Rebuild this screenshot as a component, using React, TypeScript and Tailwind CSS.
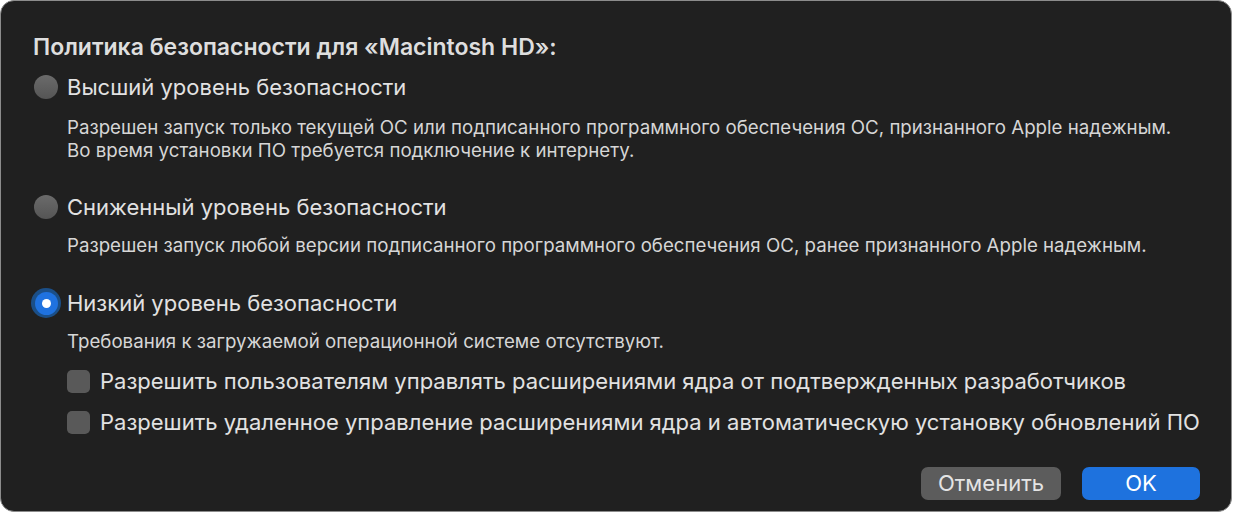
import React from "react";

const font = { fontFamily: "Inter, 'Noto Sans', sans-serif" };

function Radio({ checked }: { checked?: boolean }) {
  if (checked) {
    return (
      <span className="flex h-[30px] w-[30px] items-center justify-center rounded-full bg-[#1b4f88]">
        <span className="flex h-[23px] w-[23px] items-center justify-center rounded-full bg-[#1f72e0]">
          <span className="h-[9px] w-[9px] rounded-full bg-white" />
        </span>
      </span>
    );
  }
  return (
    <span className="flex h-[30px] w-[30px] items-center justify-center">
      <span className="h-[24px] w-[24px] rounded-full bg-gradient-to-b from-[#6b6b6b] to-[#555555]" />
    </span>
  );
}

function Checkbox() {
  return <span className="h-[23px] w-[23px] rounded-[5px] bg-[#595959]" />;
}

function Option({
  label,
  lines,
  checked,
  gap,
}: {
  label: string;
  lines: string[];
  checked?: boolean;
  gap: string;
}) {
  return (
    <div>
      <div className="flex h-[28px] items-center gap-[6px]">
        <Radio checked={checked} />
        <span className="text-[22px] leading-[28px] text-[#e2e2e2]">{label}</span>
      </div>
      <div className={`${gap} pl-[36px] text-[18.7px] leading-[23px] text-[#d6d6d6]`}>
        {lines.map((l) => (
          <div key={l}>{l}</div>
        ))}
      </div>
    </div>
  );
}

export default function App() {
  return (
    <div className="h-[513px] w-[1234px] bg-white" style={font}>
      <div className="flex h-[512px] w-[1232px] flex-col rounded-[14px] border border-[#8c8c8c] bg-[#202020] pl-[30px] pr-[30px] pt-[33px]">
        <h1 className="pl-[2px] text-[23px] font-semibold leading-[26px] text-[#dedede]">
          Политика безопасности для «Macintosh HD»:
        </h1>
        <div className="mt-[13px]">
          <Option
            gap="mt-[15px]"
            label="Высший уровень безопасности"
            lines={[
              "Разрешен запуск только текущей ОС или подписанного программного обеспечения ОС, признанного Apple надежным.",
              "Во время установки ПО требуется подключение к интернету.",
            ]}
          />
        </div>
        <div className="mt-[31px]">
          <Option
            gap="mt-[13px]"
            label="Сниженный уровень безопасности"
            lines={[
              "Разрешен запуск любой версии подписанного программного обеспечения ОС, ранее признанного Apple надежным.",
            ]}
          />
        </div>
        <div className="mt-[32px]">
          <Option
            gap="mt-[13px]"
            checked
            label="Низкий уровень безопасности"
            lines={["Требования к загружаемой операционной системе отсутствуют."]}
          />
        </div>
        <div className="mt-[14px] flex flex-col gap-[13px] pl-[36px]">
          {[
            "Разрешить пользователям управлять расширениями ядра от подтвержденных разработчиков",
            "Разрешить удаленное управление расширениями ядра и автоматическую установку обновлений ПО",
          ].map((t) => (
            <div key={t} className="flex h-[28px] items-center gap-[10px]">
              <Checkbox />
              <span className="text-[22px] leading-[28px] text-[#e2e2e2]">{t}</span>
            </div>
          ))}
        </div>
        <div className="mt-auto mb-[11px] flex justify-end gap-[21px] pr-[1px]">
          <button className="h-[33px] w-[140px] rounded-[7px] bg-[#5c5c5c] text-[22px] leading-[33px] text-[#e4e4e4]">
            Отменить
          </button>
          <button className="h-[33px] w-[118px] rounded-[7px] bg-[#1e72de] text-[22px] leading-[33px] text-white">
            OK
          </button>
        </div>
      </div>
    </div>
  );
}
